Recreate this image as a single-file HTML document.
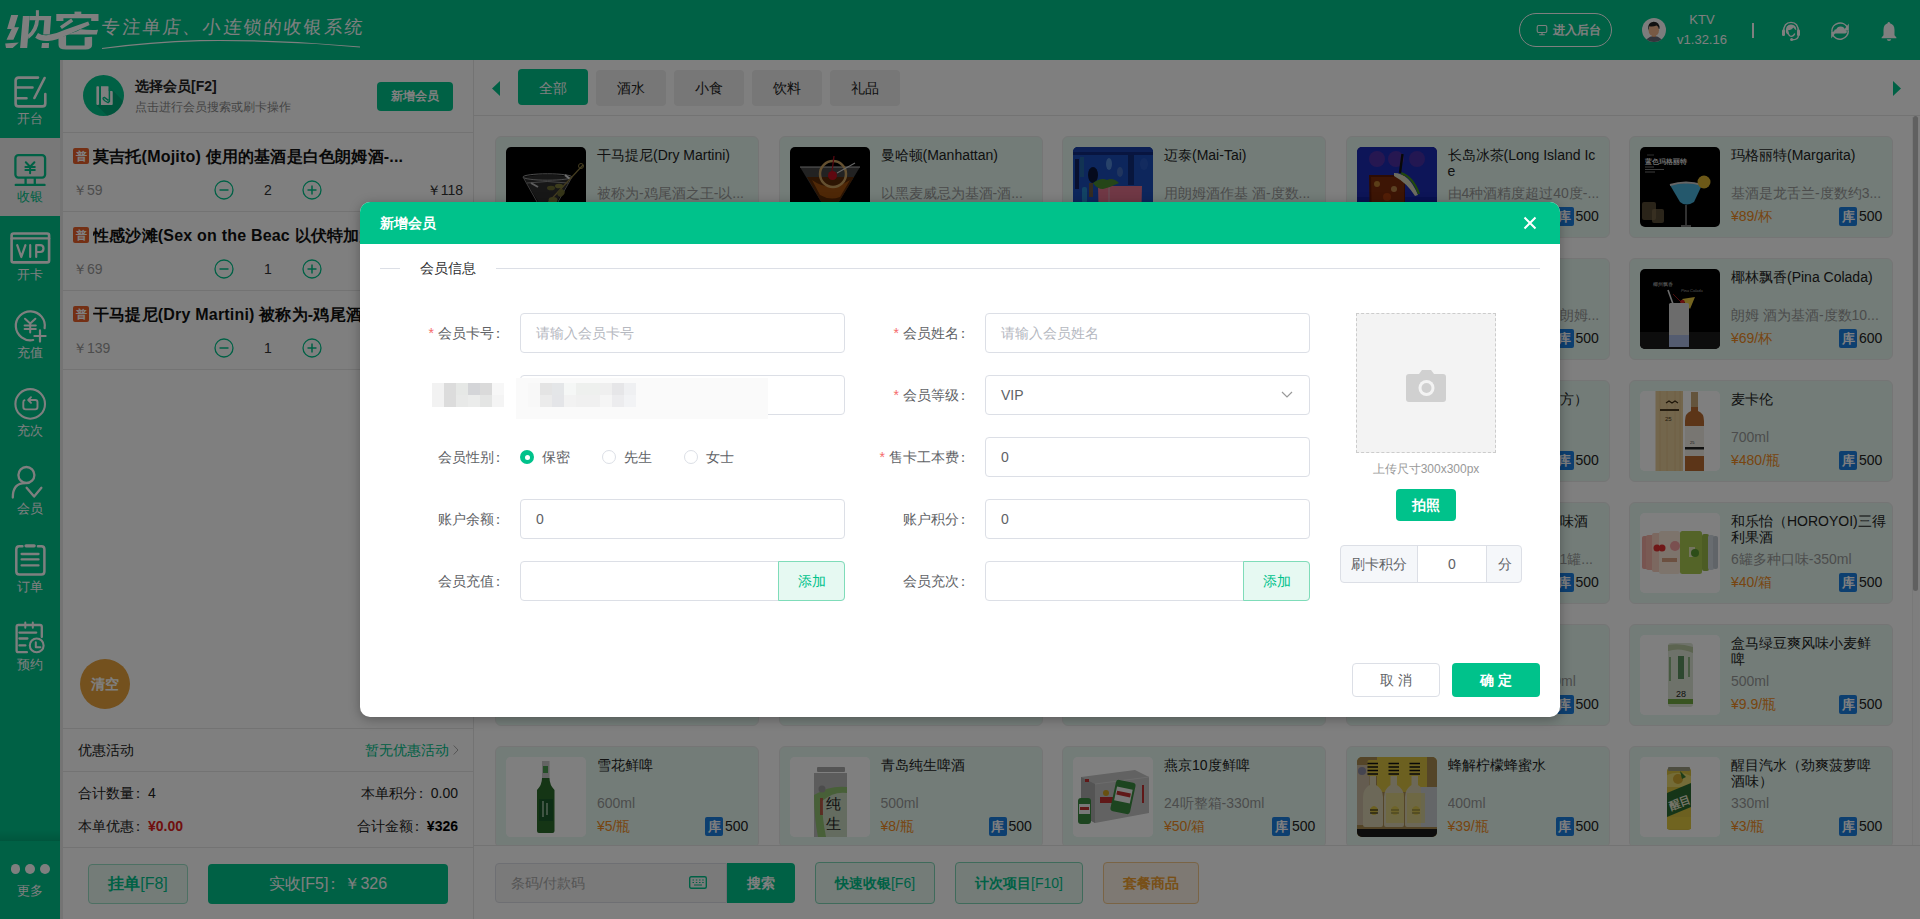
<!DOCTYPE html><html><head><meta charset="utf-8"><style>
*{box-sizing:border-box;margin:0;padding:0}
html,body{width:1920px;height:919px;overflow:hidden}
body{position:relative;font-family:"Liberation Sans",sans-serif;color:#333;background:#fff;font-size:14px}
.abs{position:absolute}
#hdr{left:0;top:0;width:1920px;height:60px;background:#00c28b}
#side{left:0;top:60px;width:60px;height:859px;background:#00c28b}
.si{position:absolute;left:0;width:60px;height:78px;color:#fff;text-align:center;font-size:13px}
.si .lb{position:absolute;left:0;width:60px;top:51px;line-height:16px}
#left{left:60px;top:60px;width:414px;height:859px;background:#fff;border-left:3px solid #e8e8e8;border-right:1px solid #e6e6e6}
#right{left:474px;top:60px;width:1446px;height:859px;background:#fff}
.card{position:absolute;width:264px;height:102px;background:#e6f9f1;border-radius:6px;border:1px solid #ebebeb}
.card .im{position:absolute;left:10px;top:10px;width:80px;height:80px;border-radius:5px;overflow:hidden;background:#fff}
.card .nm{position:absolute;left:101px;top:10px;width:160px;font-size:14px;line-height:16px;color:#222;white-space:nowrap}
.card .ds{position:absolute;left:101px;top:48px;width:156px;font-size:14px;line-height:16px;color:#999;white-space:nowrap;overflow:hidden}
.card .pr{position:absolute;left:101px;top:71px;font-size:14px;line-height:16px;color:#f08a22}
.card .kc{position:absolute;left:209px;top:70px;width:18px;height:19px;background:#1a7fe0;color:#fff;font-size:13px;font-weight:bold;line-height:19px;text-align:center;border-radius:2px}
.card .st{position:absolute;left:229px;top:71px;font-size:14px;line-height:16px;color:#222}
.tab{position:absolute;top:9px;width:70px;height:36px;border-radius:4px;background:#eeeeee;color:#333;font-size:14px;line-height:38px;text-align:center}
#ov{left:0;top:0;width:1920px;height:919px;background:rgba(0,0,0,.5)}
#modal{left:360px;top:202px;width:1200px;height:515px;background:#fff;border-radius:10px;overflow:hidden;box-shadow:0 2px 12px rgba(0,0,0,.3)}
#mh{left:0;top:0;width:1200px;height:42px;background:#00c28b;color:#fff;font-weight:bold;font-size:14px;line-height:42px;padding-left:20px}
.fl{position:absolute;font-size:14px;color:#606266;text-align:right;line-height:40px;height:40px}
.fl i{color:#f56c6c;font-style:normal;margin-right:4px}
.fi{position:absolute;height:40px;border:1px solid #dcdfe6;border-radius:4px;background:#fff;font-size:14px;line-height:38px;padding-left:15px;color:#606266}
.ph{color:#b5b8bf}
.cl{display:inline-block;margin-left:-3px;margin-right:3px}
</style></head><body>
<div id="hdr" class="abs">
<svg class="abs" style="left:0;top:0" width="104" height="60" viewBox="0 0 104 60"><g fill="#fff"><path d="M11.2 15H18.2L14.4 27.3H19L13.4 39.8H6.5L11.6 29H7.1Z"/><path d="M5.2 43.4L18.8 42.4L12.6 48H6Z"/><path d="M22.9 15.9H29.7L27.2 48H20.1Z"/><path d="M29.7 15.9H51.2L49.8 34.6H43.2L44.3 20.2H29.4Z"/><rect x="35.9" y="10.2" width="3" height="10.5"/><path d="M35.2 20.2H38.9Q38.8 31 28.4 39L27.9 34.8Q34.6 28.8 35.2 20.2Z"/><path d="M42 43.1H49L48.8 48H41.4Z"/><path d="M35.2 37.8Q40.5 41.4 48 41Q56 40.4 65 36L89.6 25L88.2 21.6L65 29.8Q56 34 48 35Q42 35.8 38 33Z"/><rect x="74.5" y="11.6" width="6.8" height="3"/><path d="M56.3 14H98.5V21H91.2V18.2H63.4V21H56.3Z"/><path d="M59.9 26.3L61.9 29L73.2 21.4L71.2 18.6Z"/><path d="M80.5 29.2Q90 30.4 98 29.8L96.8 34.6H67Q73 32.6 77.5 31Z"/><path d="M58.5 37.4L66.1 35.8V45.5H84.6V37.2L92.1 36.8V45Q92 49.4 85.5 49.6H66Q58.5 49.6 58.5 45Z"/></g></svg>
<div class="abs" style="left:102px;top:15px;font-size:18px;line-height:24px;color:#fff;letter-spacing:2.2px;font-weight:300;font-family:'Liberation Serif',serif;transform:skewX(-6deg)">专注单店、小连锁的收银系统</div>
<svg class="abs" style="left:100px;top:36px" width="265" height="14"><path d="M2 12.5Q50 6 100 4.6Q180 3.6 260 11" stroke="#fff" stroke-width="1.2" fill="none"/></svg>
<div class="abs" style="left:1519px;top:13px;width:93px;height:34px;border:1px solid #fff;border-radius:17px;color:#fff;font-size:12px;font-weight:bold;line-height:32px;padding-left:33px">进入后台</div>
<svg class="abs" style="left:1536px;top:24px" width="12" height="12"><rect x="1.2" y="1.5" width="9.6" height="7" rx="1.5" stroke="#fff" stroke-width="1.1" fill="none"/><path d="M6 8.5v2M3.2 10.8h5.6" stroke="#fff" stroke-width="1.1"/></svg>
<svg class="abs" style="left:1642px;top:18px" width="24" height="24" viewBox="0 0 24 24"><defs><clipPath id="av"><circle cx="12" cy="12" r="12"/></clipPath></defs><circle cx="12" cy="12" r="12" fill="#fafafa"/><g clip-path="url(#av)"><ellipse cx="12" cy="28" rx="10" ry="10" fill="#666a78"/><rect x="10.2" y="15" width="3.6" height="4" fill="#d89a70"/><ellipse cx="11.8" cy="12.2" rx="5.2" ry="6" fill="#f0b48a"/><path d="M6.2 11.5Q5.5 4.2 11.5 3.8Q17.5 3.6 17.6 10.5L16.8 11Q16.5 8 14.5 7.5Q11 8.8 7.5 8.2Q6.8 9.5 6.8 11.5Z" fill="#222"/></g></svg>
<div class="abs" style="left:1670px;top:10px;width:64px;text-align:center;color:#fff;font-size:13px;line-height:20px">KTV<br>v1.32.16</div>
<div class="abs" style="left:1752px;top:23px;width:2px;height:15px;background:#fff"></div>
<svg class="abs" style="left:1780px;top:20px" width="22" height="22" viewBox="0 0 22 22"><path d="M3.6 12Q3.6 2.4 11 2.4Q18.4 2.4 18.4 12" stroke="#fff" stroke-width="1.4" fill="none"/><rect x="2" y="9.5" width="3" height="6.5" rx="1.3" fill="#fff"/><rect x="17" y="9.5" width="3" height="6.5" rx="1.3" fill="#fff"/><path d="M5.8 11Q5.6 4.6 11 4.4Q16.4 4.6 16.3 10.2Q14.6 9.8 13.6 7.6Q11.8 10 8 10.6Q7.6 13 8.6 14.8Q6 14.2 5.8 11Z" fill="#fff"/><path d="M8 11.2Q8.4 16.2 11.2 16.4Q13.6 16.4 14.8 13.6" stroke="#fff" stroke-width="1.3" fill="none"/><path d="M18.5 15.5Q18 19.8 12.5 19.8" stroke="#fff" stroke-width="1.4" fill="none"/><circle cx="11.6" cy="19.6" r="1.5" fill="#fff"/></svg><svg class="abs" style="left:1829px;top:20px" width="22" height="22" viewBox="0 0 22 22"><path d="M2.8 11.5A8.3 8.3 0 0 1 18.6 7.8" stroke="#fff" stroke-width="1.5" fill="none"/><path d="M19.3 10.5A8.3 8.3 0 0 1 3.4 14.2" stroke="#fff" stroke-width="1.5" fill="none"/><path d="M19.8 3.6V10.6H14.6Z" fill="#fff"/><path d="M2.2 18.4V11.4H7.4Z" fill="#fff"/><path d="M6 13.4H16.2Q17.9 13.4 17.9 11.7Q17.9 10 16 10Q15.6 6.4 11.5 6.4Q8.2 6.4 7.3 9.3Q5 9.4 5 11.4Q5 13.4 6 13.4Z" fill="#fff"/></svg><svg class="abs" style="left:1878px;top:20px" width="22" height="22" viewBox="0 0 22 22"><path d="M10.8 2Q12 2 12 3.2Q16.5 4.5 16.5 10V15.3L18.4 17.4V18.3H3.6V17.4L5.5 15.3V10Q5.5 4.5 9.6 3.2Q9.6 2 10.8 2Z" fill="#fff"/><path d="M8.8 19.2H13.2Q13 21 11 21Q9 21 8.8 19.2Z" fill="#fff"/></svg>
</div>
<div id="side" class="abs">
<div class="si" style="top:0px;"><svg class="abs" style="left:0;top:0" width="60" height="60" viewBox="0 0 60 60"><path d="M38 17.6H18.6Q15.6 17.6 15.6 20.6V43.4Q15.6 46.4 18.6 46.4H42.3Q45.3 46.4 45.3 43.4V34" stroke-width="2.6" stroke="#fff" fill="none" stroke-linecap="round" stroke-linejoin="round"/><path d="M16.5 27.5H32.5M16.5 38.2H26.5M44.6 18L34.4 38" stroke-width="2.6" stroke="#fff" fill="none" stroke-linecap="round" stroke-linejoin="round"/></svg><div class="lb">开台</div></div>
<div class="si" style="top:78px;background:#f0f0f0;color:#00c28b;"><svg class="abs" style="left:0;top:0" width="60" height="60" viewBox="0 0 60 60"><rect x="15.4" y="17.2" width="29.7" height="22.4" rx="3" stroke-width="2.3" stroke="#00c28b" fill="none" stroke-linecap="round" stroke-linejoin="round"/><path d="M25.6 40.5V46M34.8 40.5V46" stroke-width="2.3" stroke="#00c28b" fill="none" stroke-linecap="round" stroke-linejoin="round"/><path d="M15.8 46.9H44.5" stroke-width="2.4" stroke="#00c28b" fill="none" stroke-linecap="round" stroke-linejoin="round"/><path d="M25.8 24.2L30.1 28.8L34.4 24.2M25.4 28.9H34.8M25.4 31.9H34.8M30.1 28.8V35.3" stroke-width="2" stroke="#00c28b" fill="none" stroke-linecap="round" stroke-linejoin="round"/></svg><div class="lb">收银</div></div>
<div class="si" style="top:156px;"><svg class="abs" style="left:0;top:0" width="60" height="60" viewBox="0 0 60 60"><rect x="11.6" y="17.5" width="37.5" height="28.9" rx="2" stroke-width="2.6" stroke="#fff" fill="none" stroke-linecap="round" stroke-linejoin="round"/><path d="M11.6 22.4H49.1" stroke-width="2.4" stroke="#fff" fill="none" stroke-linecap="round" stroke-linejoin="round"/><path d="M17.2 29.2L21.3 41L25.4 29.2M30.2 29.2V41M36.2 41V29.2H40.2Q43.5 29.2 43.5 32.6Q43.5 36 40.2 36H36.2" stroke-width="2.2" stroke="#fff" fill="none" stroke-linecap="round" stroke-linejoin="round"/></svg><div class="lb">开卡</div></div>
<div class="si" style="top:234px;"><svg class="abs" style="left:0;top:0" width="60" height="60" viewBox="0 0 60 60"><path d="M44.6 34.2A14.5 14.5 0 1 0 33.2 46" stroke-width="2.2" stroke="#fff" fill="none" stroke-linecap="round" stroke-linejoin="round"/><path d="M25 24.8L30.2 29.6L35.4 24.8M24.6 31.5H35.8M24.6 35.1H35.8M30.2 29.6V38.6" stroke-width="2" stroke="#fff" fill="none" stroke-linecap="round" stroke-linejoin="round"/><path d="M34.4 42H45.6M40 36.4V47.6" stroke-width="2.2" stroke="#fff" fill="none" stroke-linecap="round" stroke-linejoin="round"/></svg><div class="lb">充值</div></div>
<div class="si" style="top:312px;"><svg class="abs" style="left:0;top:0" width="60" height="60" viewBox="0 0 60 60"><circle cx="30.2" cy="31.9" r="14.8" stroke-width="2.1" stroke="#fff" fill="none" stroke-linecap="round" stroke-linejoin="round"/><path d="M28.8 28H35.2Q37.5 28 37.5 30.3V35.1Q37.5 37.4 35.2 37.4H25.6Q23.3 37.4 23.3 35.1V30.3Q23.3 28.6 24.5 28.2" stroke-width="1.9" stroke="#fff" fill="none" stroke-linecap="round" stroke-linejoin="round"/><path d="M31 25.2L28.2 28L31 30.8" stroke-width="1.9" stroke="#fff" fill="none" stroke-linecap="round" stroke-linejoin="round"/></svg><div class="lb">充次</div></div>
<div class="si" style="top:390px;"><svg class="abs" style="left:0;top:0" width="60" height="60" viewBox="0 0 60 60"><circle cx="26.4" cy="25" r="8" stroke-width="2.3" stroke="#fff" fill="none" stroke-linecap="round" stroke-linejoin="round"/><path d="M12.8 47.5Q12.8 33.2 25 33.2" stroke-width="2.3" stroke="#fff" fill="none" stroke-linecap="round" stroke-linejoin="round"/><path d="M26.6 37.8L34.1 46.6L41.4 37.8" stroke-width="2.3" stroke="#fff" fill="none" stroke-linecap="round" stroke-linejoin="round"/></svg><div class="lb">会员</div></div>
<div class="si" style="top:468px;"><svg class="abs" style="left:0;top:0" width="60" height="60" viewBox="0 0 60 60"><path d="M22.4 18.2H19.3Q16.3 18.2 16.3 21.2V43.6Q16.3 46.6 19.3 46.6H41.4Q44.4 46.6 44.4 43.6V21.2Q44.4 18.2 41.4 18.2H38" stroke-width="2.5" stroke="#fff" fill="none" stroke-linecap="round" stroke-linejoin="round"/><path d="M26 17.8H34.2" stroke-width="3.2" stroke="#fff" fill="none" stroke-linecap="round" stroke-linejoin="round"/><path d="M21.6 26H38.5M21.6 31.4H38.5M21.6 37.4H38.5" stroke-width="2.3" stroke="#fff" fill="none" stroke-linecap="round" stroke-linejoin="round"/></svg><div class="lb">订单</div></div>
<div class="si" style="top:546px;"><svg class="abs" style="left:0;top:0" width="60" height="60" viewBox="0 0 60 60"><path d="M26.9 46.2H18.4Q16.6 46.2 16.6 44.4V20.8Q16.6 19 18.4 19H40Q41.8 19 41.8 20.8V31" stroke-width="2.3" stroke="#fff" fill="none" stroke-linecap="round" stroke-linejoin="round"/><path d="M25.3 16.6V21.8M32.8 16.6V21.8" stroke-width="2" stroke="#fff" fill="none" stroke-linecap="round" stroke-linejoin="round"/><path d="M19.4 26.6H36.2M19.4 32.5H27.4M19.4 39.4H25.4" stroke-width="2.3" stroke="#fff" fill="none" stroke-linecap="round" stroke-linejoin="round"/><circle cx="36.7" cy="39.4" r="6.9" stroke-width="2.1" stroke="#fff" fill="none" stroke-linecap="round" stroke-linejoin="round"/><path d="M35.8 36.3V41.2H40.4" stroke-width="2" stroke="#fff" fill="none" stroke-linecap="round" stroke-linejoin="round"/></svg><div class="lb">预约</div></div>
<div class="abs" style="left:0;top:770px;width:60px;height:11px;background:linear-gradient(rgba(0,0,0,0),rgba(0,0,0,.12))"></div>
<div class="si" style="top:781px;height:78px"><div class="abs" style="left:10.5px;top:23px;width:9.5px;height:9.5px;border-radius:5px;background:#fff"></div><div class="abs" style="left:25.3px;top:23px;width:9.5px;height:9.5px;border-radius:5px;background:#fff"></div><div class="abs" style="left:40.1px;top:23px;width:9.5px;height:9.5px;border-radius:5px;background:#fff"></div><div class="lb" style="top:42px">更多</div></div>
</div>
<div id="left" class="abs">
<svg class="abs" style="left:20px;top:15px" width="41" height="41" viewBox="0 0 41 41"><defs><clipPath id="mc"><circle cx="20.5" cy="20.5" r="20.5"/></clipPath></defs><circle cx="20.5" cy="20.5" r="20.5" fill="#00c28b"/><path d="M25.7 11.2L29.7 16V29.9H13.4L25 41.5H45V31Z" fill="#000" opacity=".13" clip-path="url(#mc)"/><rect x="13.4" y="11.2" width="2.6" height="18.7" rx=".8" fill="#fff"/><path d="M18 11.2H24.7Q25.7 11.2 25.7 12.2V16H28.7Q29.7 16 29.7 17V28.9Q29.7 29.9 28.7 29.9H18Z" fill="#fff"/><path d="M26.4 12.2V26.3L25 27.6Q21.2 26.2 20.2 24Q19.8 22.2 21.8 22.6L25.4 25.4" stroke="#00c28b" stroke-width="1.5" fill="none"/></svg>
<div class="abs" style="left:72px;top:15.5px;font-size:14px;font-weight:bold;color:#222;line-height:20px">选择会员[F2]</div>
<div class="abs" style="left:72px;top:39px;font-size:12px;color:#888;line-height:17px">点击进行会员搜索或刷卡操作</div>
<div class="abs" style="left:314px;top:22px;width:76px;height:29px;border-radius:4px;background:#00c28b;color:#fff;font-size:12px;font-weight:bold;line-height:29px;text-align:center">新增会员</div>
<div class="abs" style="left:0;top:72px;width:410px;height:1px;background:#e6e6e6"></div>
<div class="abs" style="left:10px;top:88px;width:16px;height:16px;background:#e8612a;border-radius:2px;color:#fff;font-size:11px;font-weight:bold;line-height:16px;text-align:center">普</div>
<div class="abs" style="left:30px;top:87px;width:380px;font-size:16px;font-weight:bold;color:#111;line-height:20px;white-space:nowrap;overflow:hidden;letter-spacing:.2px">莫吉托(Mojito) 使用的基酒是白色朗姆酒-...</div>
<div class="abs" style="left:10px;top:122px;font-size:14px;color:#999;line-height:16px">￥59</div>
<svg class="abs" style="left:151px;top:120px" width="20" height="20"><circle cx="10" cy="10" r="9" stroke="#00c28b" stroke-width="1.3" fill="none"/><path d="M5.5 10h9" stroke="#00c28b" stroke-width="1.5"/></svg>
<div class="abs" style="left:190px;top:122px;width:30px;text-align:center;font-size:14px;color:#333;line-height:16px">2</div>
<svg class="abs" style="left:239px;top:120px" width="20" height="20"><circle cx="10" cy="10" r="9" stroke="#00c28b" stroke-width="1.3" fill="none"/><path d="M5.5 10h9M10 5.5v9" stroke="#00c28b" stroke-width="1.5"/></svg>
<div class="abs" style="left:300px;top:122px;width:100px;text-align:right;font-size:14px;color:#333;line-height:16px">￥118</div>
<div class="abs" style="left:0;top:151px;width:410px;height:1px;background:#e6e6e6"></div>
<div class="abs" style="left:10px;top:167px;width:16px;height:16px;background:#e8612a;border-radius:2px;color:#fff;font-size:11px;font-weight:bold;line-height:16px;text-align:center">普</div>
<div class="abs" style="left:30px;top:166px;width:380px;font-size:16px;font-weight:bold;color:#111;line-height:20px;white-space:nowrap;overflow:hidden;letter-spacing:.2px">性感沙滩(Sex on the Beac 以伏特加为基酒-...</div>
<div class="abs" style="left:10px;top:201px;font-size:14px;color:#999;line-height:16px">￥69</div>
<svg class="abs" style="left:151px;top:199px" width="20" height="20"><circle cx="10" cy="10" r="9" stroke="#00c28b" stroke-width="1.3" fill="none"/><path d="M5.5 10h9" stroke="#00c28b" stroke-width="1.5"/></svg>
<div class="abs" style="left:190px;top:201px;width:30px;text-align:center;font-size:14px;color:#333;line-height:16px">1</div>
<svg class="abs" style="left:239px;top:199px" width="20" height="20"><circle cx="10" cy="10" r="9" stroke="#00c28b" stroke-width="1.3" fill="none"/><path d="M5.5 10h9M10 5.5v9" stroke="#00c28b" stroke-width="1.5"/></svg>
<div class="abs" style="left:300px;top:201px;width:100px;text-align:right;font-size:14px;color:#333;line-height:16px">￥69</div>
<div class="abs" style="left:0;top:230px;width:410px;height:1px;background:#e6e6e6"></div>
<div class="abs" style="left:10px;top:246px;width:16px;height:16px;background:#e8612a;border-radius:2px;color:#fff;font-size:11px;font-weight:bold;line-height:16px;text-align:center">普</div>
<div class="abs" style="left:30px;top:245px;width:380px;font-size:16px;font-weight:bold;color:#111;line-height:20px;white-space:nowrap;overflow:hidden;letter-spacing:.2px">干马提尼(Dry Martini) 被称为-鸡尾酒之王-...</div>
<div class="abs" style="left:10px;top:280px;font-size:14px;color:#999;line-height:16px">￥139</div>
<svg class="abs" style="left:151px;top:278px" width="20" height="20"><circle cx="10" cy="10" r="9" stroke="#00c28b" stroke-width="1.3" fill="none"/><path d="M5.5 10h9" stroke="#00c28b" stroke-width="1.5"/></svg>
<div class="abs" style="left:190px;top:280px;width:30px;text-align:center;font-size:14px;color:#333;line-height:16px">1</div>
<svg class="abs" style="left:239px;top:278px" width="20" height="20"><circle cx="10" cy="10" r="9" stroke="#00c28b" stroke-width="1.3" fill="none"/><path d="M5.5 10h9M10 5.5v9" stroke="#00c28b" stroke-width="1.5"/></svg>
<div class="abs" style="left:300px;top:280px;width:100px;text-align:right;font-size:14px;color:#333;line-height:16px">￥139</div>
<div class="abs" style="left:0;top:309px;width:410px;height:1px;background:#e6e6e6"></div>
<div class="abs" style="left:17px;top:599px;width:50px;height:50px;border-radius:25px;background:#e8a23c;color:#fff;font-size:13.5px;font-weight:bold;line-height:52px;text-align:center">清空</div>
<div class="abs" style="left:0;top:668px;width:410px;height:1px;background:#e6e6e6"></div>
<div class="abs" style="left:15px;top:681px;font-size:14px;color:#222;line-height:18px">优惠活动</div>
<div class="abs" style="left:236px;top:681px;width:150px;text-align:right;font-size:14px;color:#00c28b;line-height:18px">暂无优惠活动</div>
<svg class="abs" style="left:390px;top:685px" width="6" height="10"><path d="M0.7 0.5L5 5L0.7 9.5" stroke="#aaa" stroke-width="1" fill="none"/></svg>
<div class="abs" style="left:0;top:711px;width:410px;height:1px;background:#e6e6e6"></div>
<div class="abs" style="left:15px;top:724px;font-size:14px;color:#222;line-height:18px">合计数量<span class="cl">：</span>4</div>
<div class="abs" style="left:200px;top:724px;width:195px;text-align:right;font-size:14px;color:#222;line-height:18px">本单积分<span class="cl">：</span>0.00</div>
<div class="abs" style="left:15px;top:757px;font-size:14px;color:#222;line-height:18px">本单优惠<span class="cl">：</span><b style="color:#e02020">¥0.00</b></div>
<div class="abs" style="left:200px;top:757px;width:195px;text-align:right;font-size:14px;color:#222;line-height:18px">合计金额<span class="cl">：</span><b style="color:#000">¥326</b></div>
<div class="abs" style="left:0;top:787px;width:410px;height:1px;background:#e6e6e6"></div>
<div class="abs" style="left:25px;top:804px;width:100px;height:40px;border:1px solid #9be0c6;background:#e8f8f1;border-radius:4px;color:#00c28b;font-size:16px;font-weight:bold;line-height:38px;text-align:center">挂单<span style="font-weight:normal">[F8]</span></div>
<div class="abs" style="left:145px;top:804px;width:240px;height:40px;background:#00c28b;border-radius:4px;color:#fff;font-size:16px;line-height:40px;text-align:center">实收[F5]<span class="cl">：</span>￥326</div>
</div>
<div id="right" class="abs">
<svg class="abs" style="left:18px;top:21px" width="9" height="15"><path d="M8 0L0 7.5L8 15Z" fill="#00c28b"/></svg>
<svg class="abs" style="left:1419px;top:21px" width="9" height="15"><path d="M0 0L8 7.5L0 15Z" fill="#00c28b"/></svg>
<div class="tab" style="left:44px;background:#00c28b;color:#fff;">全部</div>
<div class="tab" style="left:122px;top:10px;color:#222;line-height:37px;">酒水</div>
<div class="tab" style="left:200px;top:10px;color:#222;line-height:37px;">小食</div>
<div class="tab" style="left:278px;top:10px;color:#222;line-height:37px;">饮料</div>
<div class="tab" style="left:356px;top:10px;color:#222;line-height:37px;">礼品</div>
<div class="abs" style="left:0;top:55px;width:1446px;height:1px;background:#e6e6e6"></div>
<div class="abs" style="left:0;top:57px;width:1446px;height:728px;overflow:hidden">
<div class="card" style="left:21px;top:19px"><div class="im"><svg width="80" height="80" viewBox="0 0 80 80" style="display:block"><rect width="80" height="80" fill="#000"/><path d="M17 30Q41 25 66 30L50 56H33Z" fill="#3a3a3a" opacity=".8"/><ellipse cx="41.5" cy="30" rx="24.5" ry="3.2" stroke="#9a9a9a" stroke-width="1" fill="none"/><path d="M59 28L64 32" stroke="#ddd" stroke-width="2.2"/><path d="M21 36Q41 33 62 36" stroke="#8a8a8a" stroke-width="1" fill="none"/><path d="M25 36L32 40" stroke="#bbb" stroke-width="2"/><path d="M17 30L35 62M66 30L48 62" stroke="#777" stroke-width="1"/><path d="M77 18L38 60" stroke="#8a7a40" stroke-width="1.2"/><circle cx="75" cy="19" r="2.5" stroke="#8a7a40" stroke-width="1" fill="none"/><ellipse cx="45" cy="41" rx="4" ry="2.3" fill="#6a6a30"/><ellipse cx="53" cy="39" rx="4" ry="2.3" fill="#7a7a3a"/><ellipse cx="55" cy="46" rx="3.2" ry="4" fill="#6a6a30" transform="rotate(40 55 46)"/><ellipse cx="47" cy="53" rx="4.5" ry="3" fill="#7a7a38"/></svg></div><div class="nm">干马提尼(Dry Martini)</div><div class="ds">被称为-鸡尾酒之王-以...</div><div class="pr">¥139/杯</div><div class="kc">库</div><div class="st">500</div></div>
<div class="card" style="left:304.5px;top:19px"><div class="im"><svg width="80" height="80" viewBox="0 0 80 80" style="display:block"><rect width="80" height="80" fill="#000"/><path d="M10 20H70L47 58H33Z" fill="#444"/><path d="M17 30H64L47 58H33Z" fill="#5a2a06"/><path d="M22 33Q40 46 60 33L50 50Q40 54 30 48Z" fill="#b05a10" opacity=".8"/><path d="M10 20H70" stroke="#bbb" stroke-width="1"/><circle cx="43" cy="27" r="13" stroke="#c8a060" stroke-width="2.5" fill="none"/><circle cx="42.5" cy="28.5" r="4.5" fill="#c01020"/><path d="M44 9L42 25" stroke="#b01020" stroke-width="1.2"/><path d="M47 26L65 16" stroke="#ccc" stroke-width="1.1"/><path d="M33 56L47 56L40 64Z" fill="#b07a10"/></svg></div><div class="nm">曼哈顿(Manhattan)</div><div class="ds">以黑麦威忌为基酒-酒...</div><div class="pr">¥79/杯</div><div class="kc">库</div><div class="st">500</div></div>
<div class="card" style="left:588px;top:19px"><div class="im"><svg width="80" height="80" viewBox="0 0 80 80" style="display:block"><rect width="80" height="80" fill="#1a3a9a"/><rect width="80" height="80" fill="#1a4cb8"/><rect width="80" height="5" fill="#1a40a8"/><rect y="5" width="80" height="2" fill="#0a1a50"/><rect x="0" y="5" width="80" height="3" fill="#102a80"/><rect x="2" y="12" width="4" height="30" fill="#102060"/><rect x="7" y="10" width="4" height="20" fill="#2a7a9a" opacity=".6"/><ellipse cx="36" cy="17" rx="3" ry="6" fill="#6aa0e0" opacity=".7"/><ellipse cx="47" cy="25" rx="3" ry="5" fill="#5a80c0" opacity=".6"/><rect x="55" y="8" width="6" height="30" fill="#0a1850" opacity=".6"/><ellipse cx="71" cy="17" rx="4" ry="6" fill="#2a5ac0" opacity=".8"/><ellipse cx="20" cy="28" rx="5" ry="8" fill="#08081a" opacity=".8"/><rect x="16" y="36" width="4" height="14" fill="#8a6010" opacity=".7"/><rect x="9" y="40" width="5" height="16" rx="2" fill="#2aa0d0" opacity=".7"/><path d="M25 39H69L68 80H26Z" fill="#e0708a"/><path d="M36 40V56" stroke="#d0a0b0" stroke-width="2" opacity=".6"/><path d="M20 36Q28 30 34 33Q40 30 46 36Q38 40 30 42Q24 42 20 36Z" fill="#4a8a30"/></svg></div><div class="nm">迈泰(Mai-Tai)</div><div class="ds">用朗姆酒作基 酒-度数...</div><div class="pr">¥69/杯</div><div class="kc">库</div><div class="st">500</div></div>
<div class="card" style="left:871.5px;top:19px"><div class="im"><svg width="80" height="80" viewBox="0 0 80 80" style="display:block"><rect width="80" height="80" fill="#22208a"/><rect width="80" height="80" fill="#1a2ab0"/><circle cx="20" cy="12" r="8" fill="#5a30a0" opacity=".8"/><circle cx="39" cy="12" r="8" fill="#5a30a0" opacity=".8"/><circle cx="60" cy="12" r="8" fill="#5a30a0" opacity=".7"/><rect x="0" y="50" width="80" height="30" fill="#1020a0"/><path d="M12 28H48V80H13Z" fill="#5a1808"/><path d="M14 30H47V80H15Z" fill="#7a2a0a"/><circle cx="20" cy="37" r="3" fill="#d0a040" opacity=".7"/><circle cx="37" cy="42" r="3" fill="#e0c070" opacity=".6"/><circle cx="30" cy="50" r="4" fill="#c04a10" opacity=".6"/><path d="M37 26Q52 26 61 48L58 49Q50 36 37 29Z" fill="#d8d8c0"/><path d="M44 26Q56 30 62 47" stroke="#40901a" stroke-width="2.2" fill="none"/><path d="M45.5 7L43 26" stroke="#111" stroke-width="2.4"/></svg></div><div class="nm">长岛冰茶(Long Island Ic<br>e</div><div class="ds">由4种酒精度超过40度-...</div><div class="pr">¥89/杯</div><div class="kc">库</div><div class="st">500</div></div>
<div class="card" style="left:1155px;top:19px"><div class="im"><svg width="80" height="80" viewBox="0 0 80 80" style="display:block"><rect width="80" height="80" fill="#000"/><path d="M7 8H14" stroke="#777" stroke-width=".8"/><text x="5" y="17" font-size="6.5" fill="#ddd" font-weight="bold">蓝色玛格丽特</text><path d="M5 20H14M5 22.5H24M5 25H15" stroke="#999" stroke-width=".8"/><path d="M30 38Q46 34 62 38L54 55Q46 60 40 55Z" fill="#48b0d8"/><path d="M30 38Q46 33 62 38" stroke="#ccc" stroke-width="2" fill="none"/><path d="M46 58V78M41 79H51" stroke="#999" stroke-width="1.3"/><circle cx="64" cy="35" r="6.5" fill="#d8b030"/><rect x="2" y="55" width="14" height="18" rx="2" fill="#6a5a40" opacity=".8"/><rect x="12" y="62" width="12" height="14" rx="2" fill="#7a6a4a" opacity=".7"/></svg></div><div class="nm">玛格丽特(Margarita)</div><div class="ds">基酒是龙舌兰-度数约3...</div><div class="pr">¥89/杯</div><div class="kc">库</div><div class="st">500</div></div>
<div class="card" style="left:21px;top:141px"><div class="im"><svg width="80" height="80" viewBox="0 0 80 80" style="display:block"><rect width="80" height="80" fill="#000"/><path d="M17 30Q41 25 66 30L50 56H33Z" fill="#3a3a3a" opacity=".8"/><ellipse cx="41.5" cy="30" rx="24.5" ry="3.2" stroke="#9a9a9a" stroke-width="1" fill="none"/><path d="M59 28L64 32" stroke="#ddd" stroke-width="2.2"/><path d="M21 36Q41 33 62 36" stroke="#8a8a8a" stroke-width="1" fill="none"/><path d="M25 36L32 40" stroke="#bbb" stroke-width="2"/><path d="M17 30L35 62M66 30L48 62" stroke="#777" stroke-width="1"/><path d="M77 18L38 60" stroke="#8a7a40" stroke-width="1.2"/><circle cx="75" cy="19" r="2.5" stroke="#8a7a40" stroke-width="1" fill="none"/><ellipse cx="45" cy="41" rx="4" ry="2.3" fill="#6a6a30"/><ellipse cx="53" cy="39" rx="4" ry="2.3" fill="#7a7a3a"/><ellipse cx="55" cy="46" rx="3.2" ry="4" fill="#6a6a30" transform="rotate(40 55 46)"/><ellipse cx="47" cy="53" rx="4.5" ry="3" fill="#7a7a38"/></svg></div><div class="nm">莫吉托(Mojito)</div><div class="ds">使用的基酒是白色朗姆...</div><div class="pr">¥59/杯</div><div class="kc">库</div><div class="st">500</div></div>
<div class="card" style="left:304.5px;top:141px"><div class="im"><svg width="80" height="80" viewBox="0 0 80 80" style="display:block"><rect width="80" height="80" fill="#000"/><path d="M10 20H70L47 58H33Z" fill="#444"/><path d="M17 30H64L47 58H33Z" fill="#5a2a06"/><path d="M22 33Q40 46 60 33L50 50Q40 54 30 48Z" fill="#b05a10" opacity=".8"/><path d="M10 20H70" stroke="#bbb" stroke-width="1"/><circle cx="43" cy="27" r="13" stroke="#c8a060" stroke-width="2.5" fill="none"/><circle cx="42.5" cy="28.5" r="4.5" fill="#c01020"/><path d="M44 9L42 25" stroke="#b01020" stroke-width="1.2"/><path d="M47 26L65 16" stroke="#ccc" stroke-width="1.1"/><path d="M33 56L47 56L40 64Z" fill="#b07a10"/></svg></div><div class="nm">性感沙滩(Sex on the Beac</div><div class="ds">以伏特加为基酒-度数...</div><div class="pr">¥69/杯</div><div class="kc">库</div><div class="st">500</div></div>
<div class="card" style="left:588px;top:141px"><div class="im"><svg width="80" height="80" viewBox="0 0 80 80" style="display:block"><rect width="80" height="80" fill="#1a3a9a"/><rect width="80" height="80" fill="#1a4cb8"/><rect width="80" height="5" fill="#1a40a8"/><rect y="5" width="80" height="2" fill="#0a1a50"/><rect x="0" y="5" width="80" height="3" fill="#102a80"/><rect x="2" y="12" width="4" height="30" fill="#102060"/><rect x="7" y="10" width="4" height="20" fill="#2a7a9a" opacity=".6"/><ellipse cx="36" cy="17" rx="3" ry="6" fill="#6aa0e0" opacity=".7"/><ellipse cx="47" cy="25" rx="3" ry="5" fill="#5a80c0" opacity=".6"/><rect x="55" y="8" width="6" height="30" fill="#0a1850" opacity=".6"/><ellipse cx="71" cy="17" rx="4" ry="6" fill="#2a5ac0" opacity=".8"/><ellipse cx="20" cy="28" rx="5" ry="8" fill="#08081a" opacity=".8"/><rect x="16" y="36" width="4" height="14" fill="#8a6010" opacity=".7"/><rect x="9" y="40" width="5" height="16" rx="2" fill="#2aa0d0" opacity=".7"/><path d="M25 39H69L68 80H26Z" fill="#e0708a"/><path d="M36 40V56" stroke="#d0a0b0" stroke-width="2" opacity=".6"/><path d="M20 36Q28 30 34 33Q40 30 46 36Q38 40 30 42Q24 42 20 36Z" fill="#4a8a30"/></svg></div><div class="nm">龙舌兰日出</div><div class="ds">以龙舌兰为基酒-度数...</div><div class="pr">¥69/杯</div><div class="kc">库</div><div class="st">500</div></div>
<div class="card" style="left:871.5px;top:141px"><div class="im"><svg width="80" height="80" viewBox="0 0 80 80" style="display:block"><rect width="80" height="80" fill="#000"/><path d="M17 30Q41 25 66 30L50 56H33Z" fill="#3a3a3a" opacity=".8"/><ellipse cx="41.5" cy="30" rx="24.5" ry="3.2" stroke="#9a9a9a" stroke-width="1" fill="none"/><path d="M59 28L64 32" stroke="#ddd" stroke-width="2.2"/><path d="M21 36Q41 33 62 36" stroke="#8a8a8a" stroke-width="1" fill="none"/><path d="M25 36L32 40" stroke="#bbb" stroke-width="2"/><path d="M17 30L35 62M66 30L48 62" stroke="#777" stroke-width="1"/><path d="M77 18L38 60" stroke="#8a7a40" stroke-width="1.2"/><circle cx="75" cy="19" r="2.5" stroke="#8a7a40" stroke-width="1" fill="none"/><ellipse cx="45" cy="41" rx="4" ry="2.3" fill="#6a6a30"/><ellipse cx="53" cy="39" rx="4" ry="2.3" fill="#7a7a3a"/><ellipse cx="55" cy="46" rx="3.2" ry="4" fill="#6a6a30" transform="rotate(40 55 46)"/><ellipse cx="47" cy="53" rx="4.5" ry="3" fill="#7a7a38"/></svg></div><div class="nm">莫吉托(Mojito)</div><div class="ds">使用的基酒是白色朗姆...</div><div class="pr">¥59/杯</div><div class="kc">库</div><div class="st">500</div></div>
<div class="card" style="left:1155px;top:141px"><div class="im"><svg width="80" height="80" viewBox="0 0 80 80" style="display:block"><rect width="80" height="80" fill="#000"/><text x="13" y="17" font-size="4.5" fill="#ccc">椰州飘香</text><text x="41" y="23" font-size="4" fill="#aaa" font-style="italic">Pina Colada</text><path d="M28 21L33 35" stroke="#ddd" stroke-width="1.6"/><path d="M33 25L41 33" stroke="#c02020" stroke-width=".8"/><path d="M42 30L55 28L50 40Z" fill="#e8c840"/><circle cx="42.5" cy="33" r="2.3" fill="#d02020"/><rect x="0" y="63" width="80" height="17" fill="#1a1a1a"/><rect x="29" y="34" width="20" height="44" rx="1.5" fill="#d8d8d8"/><rect x="29" y="66" width="20" height="12" fill="#a8b8e0"/></svg></div><div class="nm">椰林飘香(Pina Colada)</div><div class="ds">朗姆 酒为基酒-度数10...</div><div class="pr">¥69/杯</div><div class="kc">库</div><div class="st">600</div></div>
<div class="card" style="left:21px;top:263px"><div class="im"><svg width="80" height="80" viewBox="0 0 80 80" style="display:block"><rect width="80" height="80" fill="#ffffff"/><rect x="36" y="4" width="7.5" height="17" fill="#c8c8c8"/><rect x="37" y="9" width="5" height="7" fill="#4a9a50"/><path d="M36 21H43.5Q43.5 28 48.5 33V74Q48.5 76 46.5 76H33Q31 76 31 74V33Q36 28 36 21Z" fill="#2a6a2a"/><path d="M33 42H47V64H33Z" fill="#1a5a2a"/><path d="M37 44V60M41 46V58" stroke="#c8e0c8" stroke-width="1.2"/></svg></div><div class="nm">商品</div><div class="ds">500ml</div><div class="pr">¥10/瓶</div><div class="kc">库</div><div class="st">500</div></div>
<div class="card" style="left:304.5px;top:263px"><div class="im"><svg width="80" height="80" viewBox="0 0 80 80" style="display:block"><rect width="80" height="80" fill="#ffffff"/><rect x="36" y="4" width="7.5" height="17" fill="#c8c8c8"/><rect x="37" y="9" width="5" height="7" fill="#4a9a50"/><path d="M36 21H43.5Q43.5 28 48.5 33V74Q48.5 76 46.5 76H33Q31 76 31 74V33Q36 28 36 21Z" fill="#2a6a2a"/><path d="M33 42H47V64H33Z" fill="#1a5a2a"/><path d="M37 44V60M41 46V58" stroke="#c8e0c8" stroke-width="1.2"/></svg></div><div class="nm">商品</div><div class="ds">500ml</div><div class="pr">¥10/瓶</div><div class="kc">库</div><div class="st">500</div></div>
<div class="card" style="left:588px;top:263px"><div class="im"><svg width="80" height="80" viewBox="0 0 80 80" style="display:block"><rect width="80" height="80" fill="#ffffff"/><rect x="36" y="4" width="7.5" height="17" fill="#c8c8c8"/><rect x="37" y="9" width="5" height="7" fill="#4a9a50"/><path d="M36 21H43.5Q43.5 28 48.5 33V74Q48.5 76 46.5 76H33Q31 76 31 74V33Q36 28 36 21Z" fill="#2a6a2a"/><path d="M33 42H47V64H33Z" fill="#1a5a2a"/><path d="M37 44V60M41 46V58" stroke="#c8e0c8" stroke-width="1.2"/></svg></div><div class="nm">商品</div><div class="ds">500ml</div><div class="pr">¥10/瓶</div><div class="kc">库</div><div class="st">500</div></div>
<div class="card" style="left:871.5px;top:263px"><div class="im"><svg width="80" height="80" viewBox="0 0 80 80" style="display:block"><rect width="80" height="80" fill="#ffffff"/><rect x="15.5" y="0" width="27.5" height="80" fill="#e6cc9a"/><path d="M20 0V80M27 0V80M35 0V80M40 0V80" stroke="#d4b07a" stroke-width=".8" opacity=".6"/><path d="M26 12L29 10L32 12L35 10L38 12" stroke="#3a2a10" stroke-width="1.2" fill="none"/><rect x="20" y="18" width="19" height="2" fill="#4a3a20"/><text x="25" y="30" font-size="6" fill="#4a3a20">25</text><rect x="51" y="1" width="7" height="15" fill="#c8a878"/><path d="M51 16H58V20Q64 22 64 30V80H45V30Q45 22 51 20Z" fill="#b86a30"/><rect x="45" y="35" width="19" height="30" fill="#f0ece4"/><rect x="45" y="56" width="19" height="2.5" fill="#222"/><text x="50" y="53" font-size="4" fill="#333">25</text></svg></div><div class="nm">金酒（伦敦干型配方）</div><div class="ds">700ml</div><div class="pr">¥380/瓶</div><div class="kc">库</div><div class="st">500</div></div>
<div class="card" style="left:1155px;top:263px"><div class="im"><svg width="80" height="80" viewBox="0 0 80 80" style="display:block"><rect width="80" height="80" fill="#ffffff"/><rect x="15.5" y="0" width="27.5" height="80" fill="#e6cc9a"/><path d="M20 0V80M27 0V80M35 0V80M40 0V80" stroke="#d4b07a" stroke-width=".8" opacity=".6"/><path d="M26 12L29 10L32 12L35 10L38 12" stroke="#3a2a10" stroke-width="1.2" fill="none"/><rect x="20" y="18" width="19" height="2" fill="#4a3a20"/><text x="25" y="30" font-size="6" fill="#4a3a20">25</text><rect x="51" y="1" width="7" height="15" fill="#c8a878"/><path d="M51 16H58V20Q64 22 64 30V80H45V30Q45 22 51 20Z" fill="#b86a30"/><rect x="45" y="35" width="19" height="30" fill="#f0ece4"/><rect x="45" y="56" width="19" height="2.5" fill="#222"/><text x="50" y="53" font-size="4" fill="#333">25</text></svg></div><div class="nm">麦卡伦</div><div class="ds">700ml</div><div class="pr">¥480/瓶</div><div class="kc">库</div><div class="st">500</div></div>
<div class="card" style="left:21px;top:385px"><div class="im"><svg width="80" height="80" viewBox="0 0 80 80" style="display:block"><rect width="80" height="80" fill="#ffffff"/><rect x="36" y="4" width="7.5" height="17" fill="#c8c8c8"/><rect x="37" y="9" width="5" height="7" fill="#4a9a50"/><path d="M36 21H43.5Q43.5 28 48.5 33V74Q48.5 76 46.5 76H33Q31 76 31 74V33Q36 28 36 21Z" fill="#2a6a2a"/><path d="M33 42H47V64H33Z" fill="#1a5a2a"/><path d="M37 44V60M41 46V58" stroke="#c8e0c8" stroke-width="1.2"/></svg></div><div class="nm">商品</div><div class="ds">500ml</div><div class="pr">¥10/瓶</div><div class="kc">库</div><div class="st">500</div></div>
<div class="card" style="left:304.5px;top:385px"><div class="im"><svg width="80" height="80" viewBox="0 0 80 80" style="display:block"><rect width="80" height="80" fill="#ffffff"/><rect x="36" y="4" width="7.5" height="17" fill="#c8c8c8"/><rect x="37" y="9" width="5" height="7" fill="#4a9a50"/><path d="M36 21H43.5Q43.5 28 48.5 33V74Q48.5 76 46.5 76H33Q31 76 31 74V33Q36 28 36 21Z" fill="#2a6a2a"/><path d="M33 42H47V64H33Z" fill="#1a5a2a"/><path d="M37 44V60M41 46V58" stroke="#c8e0c8" stroke-width="1.2"/></svg></div><div class="nm">商品</div><div class="ds">500ml</div><div class="pr">¥10/瓶</div><div class="kc">库</div><div class="st">500</div></div>
<div class="card" style="left:588px;top:385px"><div class="im"><svg width="80" height="80" viewBox="0 0 80 80" style="display:block"><rect width="80" height="80" fill="#ffffff"/><rect x="36" y="4" width="7.5" height="17" fill="#c8c8c8"/><rect x="37" y="9" width="5" height="7" fill="#4a9a50"/><path d="M36 21H43.5Q43.5 28 48.5 33V74Q48.5 76 46.5 76H33Q31 76 31 74V33Q36 28 36 21Z" fill="#2a6a2a"/><path d="M33 42H47V64H33Z" fill="#1a5a2a"/><path d="M37 44V60M41 46V58" stroke="#c8e0c8" stroke-width="1.2"/></svg></div><div class="nm">商品</div><div class="ds">500ml</div><div class="pr">¥10/瓶</div><div class="kc">库</div><div class="st">500</div></div>
<div class="card" style="left:871.5px;top:385px"><div class="im"><svg width="80" height="80" viewBox="0 0 80 80" style="display:block"><rect width="80" height="80" fill="#ffffff"/><rect x="2" y="23" width="8" height="33" rx="2" fill="#f0a8a0"/><rect x="6" y="22" width="9" height="35" rx="2" fill="#f4b4a8"/><rect x="12" y="20" width="9" height="39" rx="2" fill="#f8d0c0"/><circle cx="17" cy="35" r="3.5" fill="#e03030"/><rect x="19" y="18" width="21" height="43" rx="2.5" fill="#fae8d8"/><circle cx="22" cy="35" r="3.5" fill="#e03030"/><circle cx="35" cy="33" r="5" fill="#f4a0a0"/><rect x="22" y="45" width="15" height="4" fill="#d8a080"/><rect x="40" y="18" width="22" height="43" rx="2.5" fill="#a8c850"/><rect x="49" y="34" width="6" height="10" fill="#e8e8c0"/><circle cx="55" cy="40" r="4" fill="#5a9a30"/><rect x="62" y="21" width="7" height="37" rx="2" fill="#98b848"/><rect x="68" y="22" width="6" height="35" rx="2" fill="#d0d8e0"/><rect x="73" y="23" width="5" height="33" rx="2" fill="#c0c8d0"/></svg></div><div class="nm">三得利和乐怡水果味酒</div><div class="ds">多种口味混合装箱1罐...</div><div class="pr">¥10/罐</div><div class="kc">库</div><div class="st">500</div></div>
<div class="card" style="left:1155px;top:385px"><div class="im"><svg width="80" height="80" viewBox="0 0 80 80" style="display:block"><rect width="80" height="80" fill="#ffffff"/><rect x="2" y="23" width="8" height="33" rx="2" fill="#f0a8a0"/><rect x="6" y="22" width="9" height="35" rx="2" fill="#f4b4a8"/><rect x="12" y="20" width="9" height="39" rx="2" fill="#f8d0c0"/><circle cx="17" cy="35" r="3.5" fill="#e03030"/><rect x="19" y="18" width="21" height="43" rx="2.5" fill="#fae8d8"/><circle cx="22" cy="35" r="3.5" fill="#e03030"/><circle cx="35" cy="33" r="5" fill="#f4a0a0"/><rect x="22" y="45" width="15" height="4" fill="#d8a080"/><rect x="40" y="18" width="22" height="43" rx="2.5" fill="#a8c850"/><rect x="49" y="34" width="6" height="10" fill="#e8e8c0"/><circle cx="55" cy="40" r="4" fill="#5a9a30"/><rect x="62" y="21" width="7" height="37" rx="2" fill="#98b848"/><rect x="68" y="22" width="6" height="35" rx="2" fill="#d0d8e0"/><rect x="73" y="23" width="5" height="33" rx="2" fill="#c0c8d0"/></svg></div><div class="nm">和乐怡（HOROYOI)三得<br>利果酒</div><div class="ds">6罐多种口味-350ml</div><div class="pr">¥40/箱</div><div class="kc">库</div><div class="st">500</div></div>
<div class="card" style="left:21px;top:507px"><div class="im"><svg width="80" height="80" viewBox="0 0 80 80" style="display:block"><rect width="80" height="80" fill="#ffffff"/><rect x="36" y="4" width="7.5" height="17" fill="#c8c8c8"/><rect x="37" y="9" width="5" height="7" fill="#4a9a50"/><path d="M36 21H43.5Q43.5 28 48.5 33V74Q48.5 76 46.5 76H33Q31 76 31 74V33Q36 28 36 21Z" fill="#2a6a2a"/><path d="M33 42H47V64H33Z" fill="#1a5a2a"/><path d="M37 44V60M41 46V58" stroke="#c8e0c8" stroke-width="1.2"/></svg></div><div class="nm">商品</div><div class="ds">500ml</div><div class="pr">¥10/瓶</div><div class="kc">库</div><div class="st">500</div></div>
<div class="card" style="left:304.5px;top:507px"><div class="im"><svg width="80" height="80" viewBox="0 0 80 80" style="display:block"><rect width="80" height="80" fill="#ffffff"/><rect x="36" y="4" width="7.5" height="17" fill="#c8c8c8"/><rect x="37" y="9" width="5" height="7" fill="#4a9a50"/><path d="M36 21H43.5Q43.5 28 48.5 33V74Q48.5 76 46.5 76H33Q31 76 31 74V33Q36 28 36 21Z" fill="#2a6a2a"/><path d="M33 42H47V64H33Z" fill="#1a5a2a"/><path d="M37 44V60M41 46V58" stroke="#c8e0c8" stroke-width="1.2"/></svg></div><div class="nm">商品</div><div class="ds">500ml</div><div class="pr">¥10/瓶</div><div class="kc">库</div><div class="st">500</div></div>
<div class="card" style="left:588px;top:507px"><div class="im"><svg width="80" height="80" viewBox="0 0 80 80" style="display:block"><rect width="80" height="80" fill="#ffffff"/><rect x="36" y="4" width="7.5" height="17" fill="#c8c8c8"/><rect x="37" y="9" width="5" height="7" fill="#4a9a50"/><path d="M36 21H43.5Q43.5 28 48.5 33V74Q48.5 76 46.5 76H33Q31 76 31 74V33Q36 28 36 21Z" fill="#2a6a2a"/><path d="M33 42H47V64H33Z" fill="#1a5a2a"/><path d="M37 44V60M41 46V58" stroke="#c8e0c8" stroke-width="1.2"/></svg></div><div class="nm">商品</div><div class="ds">500ml</div><div class="pr">¥10/瓶</div><div class="kc">库</div><div class="st">500</div></div>
<div class="card" style="left:871.5px;top:507px"><div class="im"><svg width="80" height="80" viewBox="0 0 80 80" style="display:block"><rect width="80" height="80" fill="#ffffff"/><rect x="28" y="8" width="25" height="64" rx="3" fill="#dde4d4"/><path d="M28 10Q40 8 53 12V18Q40 12 28 16Z" fill="#b8c8a0"/><rect x="38" y="21" width="6" height="23" fill="#3a7a40" opacity=".8"/><path d="M30 22V46M49 22V42" stroke="#6aa060" stroke-width="2" opacity=".7"/><text x="36" y="62" font-size="9" fill="#222">28</text><rect x="28" y="64" width="25" height="5" fill="#70a840"/></svg></div><div class="nm">百威啤酒</div><div class="ds">啤酒24听整箱-330ml</div><div class="pr">¥9/瓶</div><div class="kc">库</div><div class="st">500</div></div>
<div class="card" style="left:1155px;top:507px"><div class="im"><svg width="80" height="80" viewBox="0 0 80 80" style="display:block"><rect width="80" height="80" fill="#ffffff"/><rect x="28" y="8" width="25" height="64" rx="3" fill="#dde4d4"/><path d="M28 10Q40 8 53 12V18Q40 12 28 16Z" fill="#b8c8a0"/><rect x="38" y="21" width="6" height="23" fill="#3a7a40" opacity=".8"/><path d="M30 22V46M49 22V42" stroke="#6aa060" stroke-width="2" opacity=".7"/><text x="36" y="62" font-size="9" fill="#222">28</text><rect x="28" y="64" width="25" height="5" fill="#70a840"/></svg></div><div class="nm">盒马绿豆爽风味小麦鲜<br>啤</div><div class="ds">500ml</div><div class="pr">¥9.9/瓶</div><div class="kc">库</div><div class="st">500</div></div>
<div class="card" style="left:21px;top:629px"><div class="im"><svg width="80" height="80" viewBox="0 0 80 80" style="display:block"><rect width="80" height="80" fill="#ffffff"/><rect x="36" y="4" width="7.5" height="17" fill="#c8c8c8"/><rect x="37" y="9" width="5" height="7" fill="#4a9a50"/><path d="M36 21H43.5Q43.5 28 48.5 33V74Q48.5 76 46.5 76H33Q31 76 31 74V33Q36 28 36 21Z" fill="#2a6a2a"/><path d="M33 42H47V64H33Z" fill="#1a5a2a"/><path d="M37 44V60M41 46V58" stroke="#c8e0c8" stroke-width="1.2"/></svg></div><div class="nm">雪花鲜啤</div><div class="ds">600ml</div><div class="pr">¥5/瓶</div><div class="kc">库</div><div class="st">500</div></div>
<div class="card" style="left:304.5px;top:629px"><div class="im"><svg width="80" height="80" viewBox="0 0 80 80" style="display:block"><rect width="80" height="80" fill="#ffffff"/><rect x="27" y="10" width="28" height="5" rx="1" fill="#a8a8a8"/><rect x="24" y="16" width="33" height="64" fill="#b8b8b8"/><path d="M24 38Q40 28 57 30V80H28Q24 60 24 38Z" fill="#90c070"/><path d="M32 44Q44 34 57 36V80H36Q32 60 32 44Z" fill="#c8d8c0"/><circle cx="32" cy="32" r="3.5" fill="#999"/><text x="36" y="52" font-size="15" fill="#222">纯</text><text x="36" y="72" font-size="15" fill="#222">生</text><rect x="30" y="41" width="3" height="17" fill="#c03030" opacity=".7"/></svg></div><div class="nm">青岛纯生啤酒</div><div class="ds">500ml</div><div class="pr">¥8/瓶</div><div class="kc">库</div><div class="st">500</div></div>
<div class="card" style="left:588px;top:629px"><div class="im"><svg width="80" height="80" viewBox="0 0 80 80" style="display:block"><rect width="80" height="80" fill="#ffffff"/><path d="M8 20L62 13L76 20V56L22 66L8 58Z" fill="#c4c4c4"/><path d="M8 20L22 27V66L8 58Z" fill="#a8a8a8"/><path d="M22 27L76 20" stroke="#d8d8d8" stroke-width="1"/><rect x="12" y="22" width="4" height="3" fill="#c03030"/><circle cx="33" cy="36" r="3" fill="#d0a020"/><rect x="27" y="40" width="14" height="6" fill="#c03030"/><rect x="5" y="41" width="13" height="26" rx="3" fill="#3a8a40"/><rect x="6" y="47" width="11" height="10" fill="#f0f0f0"/><rect x="7" y="50" width="9" height="3" fill="#c03030"/><g transform="rotate(12 50 40)"><rect x="40" y="24" width="20" height="32" rx="3" fill="#3a8a40"/><rect x="42" y="31" width="16" height="14" fill="#f0f0f0"/><rect x="43" y="35" width="14" height="4" fill="#c03030"/></g><path d="M70 28V46" stroke="#c03030" stroke-width="2"/></svg></div><div class="nm">燕京10度鲜啤</div><div class="ds">24听整箱-330ml</div><div class="pr">¥50/箱</div><div class="kc">库</div><div class="st">500</div></div>
<div class="card" style="left:871.5px;top:629px"><div class="im"><svg width="80" height="80" viewBox="0 0 80 80" style="display:block"><rect width="80" height="80" fill="#c8a830"/><rect width="80" height="80" fill="#a88a50"/><rect x="20" y="0" width="50" height="35" fill="#d8c040"/><rect x="0" y="8" width="12" height="60" fill="#c8b8a0"/><circle cx="5" cy="14" r="4" fill="#8a8aa0"/><rect x="0" y="72" width="80" height="8" fill="#1a1a1a"/><g><rect x="10.5" y="3" width="10.5" height="16" rx="1.5" fill="#d8c040"/><path d="M10.5 6.5H21M10.5 10H21M10.5 13.5H21M10.5 17H21" stroke="#111" stroke-width="1.4"/><path d="M12.5 19H19V28Q26 32 26 40V68Q26 70 24 70H8Q6 70 6 68V40Q6 32 12.5 28Z" fill="#d8d0b0"/><path d="M13 52Q17 46 21 52Q21 58 17 58Q13 58 13 52Z" fill="#d8c040"/><path d="M13 53H21M13 56H21" stroke="#111" stroke-width="1.2"/></g><g transform="translate(21 0)"><rect x="10.5" y="3" width="10.5" height="16" rx="1.5" fill="#d8c040"/><path d="M10.5 6.5H21M10.5 10H21M10.5 13.5H21M10.5 17H21" stroke="#111" stroke-width="1.4"/><path d="M12.5 19H19V28Q26 32 26 40V68Q26 70 24 70H8Q6 70 6 68V40Q6 32 12.5 28Z" fill="#d8d0b0"/><path d="M13 52Q17 46 21 52Q21 58 17 58Q13 58 13 52Z" fill="#d8c040"/><path d="M13 53H21M13 56H21" stroke="#111" stroke-width="1.2"/></g><g transform="translate(42 0)"><rect x="10.5" y="3" width="10.5" height="16" rx="1.5" fill="#d8c040"/><path d="M10.5 6.5H21M10.5 10H21M10.5 13.5H21M10.5 17H21" stroke="#111" stroke-width="1.4"/><path d="M12.5 19H19V28Q26 32 26 40V68Q26 70 24 70H8Q6 70 6 68V40Q6 32 12.5 28Z" fill="#d8d0b0"/><path d="M13 52Q17 46 21 52Q21 58 17 58Q13 58 13 52Z" fill="#d8c040"/><path d="M13 53H21M13 56H21" stroke="#111" stroke-width="1.2"/></g><rect x="64" y="30" width="16" height="40" fill="#c8ccd0"/><rect x="29" y="36" width="18" height="30" fill="#e0d060" opacity=".55"/><rect x="50" y="36" width="18" height="30" fill="#e0d060" opacity=".5"/></svg></div><div class="nm">蜂解柠檬蜂蜜水</div><div class="ds">400ml</div><div class="pr">¥39/瓶</div><div class="kc">库</div><div class="st">500</div></div>
<div class="card" style="left:1155px;top:629px"><div class="im"><svg width="80" height="80" viewBox="0 0 80 80" style="display:block"><rect width="80" height="80" fill="#ffffff"/><rect x="27" y="11" width="24" height="62" rx="3" fill="#d8c040"/><rect x="28" y="10" width="22" height="4" rx="1" fill="#9a9a80"/><path d="M27 18Q39 13 51 19V30H27Z" fill="#e8d870"/><circle cx="38" cy="22" r="5" fill="#d0a830"/><path d="M40 14L46 20L42 22Z" fill="#3a7a30"/><path d="M27 36L51 26V50L27 60Z" fill="#2a6a30"/><text x="29" y="50" font-size="11" fill="#e8e8d0" font-weight="bold" transform="rotate(-20 38 46)">醒目</text><rect x="27" y="60" width="24" height="12" fill="#e0c840"/></svg></div><div class="nm">醒目汽水（劲爽菠萝啤<br>酒味）</div><div class="ds">330ml</div><div class="pr">¥3/瓶</div><div class="kc">库</div><div class="st">500</div></div>
</div>
<div class="abs" style="left:1438px;top:57px;width:7px;height:728px;background:#fcfcfc;border-left:1px solid #f0f0f0"></div>
<div class="abs" style="left:1439px;top:56px;width:5px;height:475px;border-radius:3px;background:#c1c1c1"></div>
<div class="abs" style="left:0;top:785px;width:1446px;height:1px;background:#e6e6e6"></div>
<div class="abs" style="left:21px;top:803px;width:232px;height:40px;border:1px solid #dcdfe6;border-radius:4px 0 0 4px;background:#f5f5f5;color:#aaa;font-size:14px;line-height:38px;padding-left:15px">条码/付款码</div>
<svg class="abs" style="left:215px;top:816px" width="18" height="13" viewBox="0 0 18 13"><rect x="0.7" y="0.7" width="16.6" height="11.6" rx="1.5" stroke="#00c28b" stroke-width="1.4" fill="none"/><path d="M3.5 4H5M6.8 4H8.3M10 4H11.5M13.2 4H14.7M3.5 6.5H5M6.8 6.5H8.3M10 6.5H11.5M13.2 6.5H14.7M5 9H13" stroke="#00c28b" stroke-width="1.2"/></svg>
<div class="abs" style="left:253px;top:803px;width:68px;height:40px;background:#00c28b;border-radius:0 4px 4px 0;color:#fff;font-size:14px;font-weight:bold;line-height:40px;text-align:center">搜索</div>
<div class="abs" style="left:341px;top:802px;width:120px;height:42px;border:1px solid #7fd6b6;background:#e8f8f1;border-radius:4px;color:#00c28b;font-size:14px;font-weight:bold;line-height:41px;text-align:center">快速收银<span style="font-weight:normal">[F6]</span></div>
<div class="abs" style="left:481px;top:802px;width:128px;height:42px;border:1px solid #7fd6b6;background:#e8f8f1;border-radius:4px;color:#00c28b;font-size:14px;font-weight:bold;line-height:41px;text-align:center">计次项目<span style="font-weight:normal">[F10]</span></div>
<div class="abs" style="left:629px;top:802px;width:96px;height:42px;border:1px solid #f5c88a;background:#fdf3e6;border-radius:4px;color:#f0a030;font-size:14px;font-weight:bold;line-height:41px;text-align:center">套餐商品</div>
</div>
<div id="ov" class="abs"></div>
<div id="modal" class="abs">
<div id="mh" class="abs">新增会员</div>
<svg class="abs" style="left:1163px;top:14px" width="14" height="14"><path d="M1.5 1.5L12.5 12.5M12.5 1.5L1.5 12.5" stroke="#fff" stroke-width="2"/></svg>
<div class="abs" style="left:20px;top:66px;width:20px;height:1px;background:#dcdfe6"></div>
<div class="abs" style="left:60px;top:57px;font-size:14px;color:#303133;line-height:18px">会员信息</div>
<div class="abs" style="left:136px;top:66px;width:1044px;height:1px;background:#dcdfe6"></div>
<div class="fl" style="left:40px;top:111px;width:108px"><i>*</i>会员卡号<span class="cl">：</span></div>
<div class="fi" style="left:160px;top:111px;width:325px"><span class="ph">请输入会员卡号</span></div>
<div class="fi" style="left:160px;top:173px;width:325px"></div>
<div class="fl" style="left:40px;top:235px;width:108px">会员性别<span class="cl">：</span></div>
<div class="fl" style="left:40px;top:297px;width:108px">账户余额<span class="cl">：</span></div>
<div class="fi" style="left:160px;top:297px;width:325px">0</div>
<div class="fl" style="left:40px;top:359px;width:108px">会员充值<span class="cl">：</span></div>
<div class="fi" style="left:160px;top:359px;width:325px"></div>
<div class="abs" style="left:418px;top:359px;width:67px;height:40px;border:1px solid #7fdcb9;background:#e6f9f2;border-radius:0 4px 4px 0;color:#00c28b;font-size:14px;line-height:38px;text-align:center">添加</div>
<div class="abs" style="left:160px;top:248px;width:14px;height:14px;border-radius:7px;background:#00c28b"><div class="abs" style="left:4.5px;top:4.5px;width:5px;height:5px;border-radius:3px;background:#fff"></div></div>
<div class="abs" style="left:182px;top:246px;font-size:14px;color:#606266;line-height:18px">保密</div>
<div class="abs" style="left:242px;top:248px;width:14px;height:14px;border-radius:7px;border:1px solid #dcdfe6;background:#fff"></div>
<div class="abs" style="left:264px;top:246px;font-size:14px;color:#606266;line-height:18px">先生</div>
<div class="abs" style="left:324px;top:248px;width:14px;height:14px;border-radius:7px;border:1px solid #dcdfe6;background:#fff"></div>
<div class="abs" style="left:346px;top:246px;font-size:14px;color:#606266;line-height:18px">女士</div>
<div class="abs" style="left:72px;top:181px;width:12px;height:12px;background:#f2f2f2"></div>
<div class="abs" style="left:72px;top:193px;width:12px;height:12px;background:#f2f2f2"></div>
<div class="abs" style="left:84px;top:181px;width:12px;height:12px;background:#dcdcdc"></div>
<div class="abs" style="left:84px;top:193px;width:12px;height:12px;background:#dcdcdc"></div>
<div class="abs" style="left:96px;top:181px;width:12px;height:12px;background:#e6e8e6"></div>
<div class="abs" style="left:96px;top:193px;width:12px;height:12px;background:#e8e9e8"></div>
<div class="abs" style="left:108px;top:181px;width:12px;height:12px;background:#d4d5d8"></div>
<div class="abs" style="left:108px;top:193px;width:12px;height:12px;background:#ebeceb"></div>
<div class="abs" style="left:120px;top:181px;width:12px;height:12px;background:#dadada"></div>
<div class="abs" style="left:120px;top:193px;width:12px;height:12px;background:#e4e5e4"></div>
<div class="abs" style="left:132px;top:181px;width:12px;height:12px;background:#f7f7f7"></div>
<div class="abs" style="left:132px;top:193px;width:12px;height:12px;background:#f4f4f4"></div>
<div class="abs" style="left:156px;top:176px;width:252px;height:41px;background:#fafafa"></div>
<div class="abs" style="left:168px;top:181px;width:12px;height:12px;background:#f8f8f8"></div>
<div class="abs" style="left:168px;top:193px;width:12px;height:12px;background:#f8f8f8"></div>
<div class="abs" style="left:180px;top:181px;width:12px;height:12px;background:#e4e4e4"></div>
<div class="abs" style="left:180px;top:193px;width:12px;height:12px;background:#ebebeb"></div>
<div class="abs" style="left:192px;top:181px;width:12px;height:12px;background:#e4e6e8"></div>
<div class="abs" style="left:192px;top:193px;width:12px;height:12px;background:#e4e5e8"></div>
<div class="abs" style="left:204px;top:181px;width:12px;height:12px;background:#f5f7f6"></div>
<div class="abs" style="left:204px;top:193px;width:12px;height:12px;background:#f2f2f2"></div>
<div class="abs" style="left:216px;top:181px;width:12px;height:12px;background:#eef0ee"></div>
<div class="abs" style="left:216px;top:193px;width:12px;height:12px;background:#f0f0f0"></div>
<div class="abs" style="left:228px;top:181px;width:12px;height:12px;background:#eef0ee"></div>
<div class="abs" style="left:228px;top:193px;width:12px;height:12px;background:#f0f0f0"></div>
<div class="abs" style="left:240px;top:181px;width:12px;height:12px;background:#efefef"></div>
<div class="abs" style="left:240px;top:193px;width:12px;height:12px;background:#f5f5f5"></div>
<div class="abs" style="left:252px;top:181px;width:12px;height:12px;background:#e6e6e8"></div>
<div class="abs" style="left:252px;top:193px;width:12px;height:12px;background:#ececee"></div>
<div class="abs" style="left:264px;top:181px;width:12px;height:12px;background:#eff0f2"></div>
<div class="abs" style="left:264px;top:193px;width:12px;height:12px;background:#f2f3f5"></div>
<div class="fl" style="left:505px;top:111px;width:108px"><i>*</i>会员姓名<span class="cl">：</span></div>
<div class="fi" style="left:625px;top:111px;width:325px"><span class="ph">请输入会员姓名</span></div>
<div class="fl" style="left:505px;top:173px;width:108px"><i>*</i>会员等级<span class="cl">：</span></div>
<div class="fi" style="left:625px;top:173px;width:325px">VIP</div>
<svg class="abs" style="left:921px;top:189px" width="12" height="8"><path d="M1 1L6 6L11 1" stroke="#999" stroke-width="1.2" fill="none"/></svg>
<div class="fl" style="left:485px;top:235px;width:128px"><i>*</i>售卡工本费<span class="cl">：</span></div>
<div class="fi" style="left:625px;top:235px;width:325px">0</div>
<div class="fl" style="left:505px;top:297px;width:108px">账户积分<span class="cl">：</span></div>
<div class="fi" style="left:625px;top:297px;width:325px">0</div>
<div class="fl" style="left:505px;top:359px;width:108px">会员充次<span class="cl">：</span></div>
<div class="fi" style="left:625px;top:359px;width:325px"></div>
<div class="abs" style="left:883px;top:359px;width:67px;height:40px;border:1px solid #7fdcb9;background:#e6f9f2;border-radius:0 4px 4px 0;color:#00c28b;font-size:14px;line-height:38px;text-align:center">添加</div>
<div class="abs" style="left:996px;top:111px;width:140px;height:140px;border:1px dashed #ccc;background:#f3f3f3"></div>
<svg class="abs" style="left:1046px;top:168px" width="40" height="32"><path d="M13 4L16 0H25L28 4H37Q40 4 40 7V29Q40 32 37 32H3Q0 32 0 29V7Q0 4 3 4Z" fill="#d0d0d0"/><circle cx="20.5" cy="18" r="8" fill="#f3f3f3"/><circle cx="20.5" cy="18" r="5" fill="#d0d0d0"/></svg>
<div class="abs" style="left:996px;top:259px;width:140px;text-align:center;font-size:12px;color:#999;line-height:16px">上传尺寸300x300px</div>
<div class="abs" style="left:1036px;top:287px;width:60px;height:32px;background:#00c28b;border-radius:4px;color:#fff;font-weight:bold;font-size:14px;line-height:32px;text-align:center">拍照</div>
<div class="abs" style="left:980px;top:343px;width:182px;height:38px;border:1px solid #dcdfe6;border-radius:4px;background:#f5f7fa"></div>
<div class="abs" style="left:980px;top:343px;width:77px;height:38px;color:#606266;font-size:14px;line-height:38px;text-align:center">刷卡积分</div>
<div class="abs" style="left:1057px;top:343px;width:70px;height:38px;border:1px solid #dcdfe6;background:#fff;color:#606266;font-size:14px;line-height:36px;text-align:center">0</div>
<div class="abs" style="left:1127px;top:343px;width:35px;height:38px;color:#606266;font-size:14px;line-height:38px;text-align:center">分</div>
<div class="abs" style="left:992px;top:461px;width:88px;height:34px;border:1px solid #dcdfe6;border-radius:4px;color:#606266;font-size:14px;line-height:32px;text-align:center;letter-spacing:4px;padding-left:4px">取消</div>
<div class="abs" style="left:1092px;top:461px;width:88px;height:34px;background:#00c28b;border-radius:4px;color:#fff;font-weight:bold;font-size:14px;line-height:34px;text-align:center;letter-spacing:4px;padding-left:4px">确定</div>
</div>
</body></html>
